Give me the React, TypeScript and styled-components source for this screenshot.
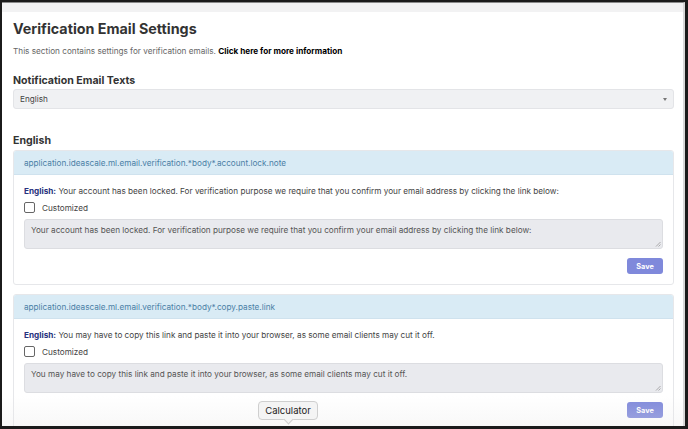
import styled, { createGlobalStyle } from 'styled-components';

const GlobalStyle = createGlobalStyle`
  html, body {
    margin: 0;
    padding: 0;
    background: #1b1b1b;
  }
  * {
    box-sizing: border-box;
  }
`;

const Frame = styled.div`
  width: 688px;
  height: 429px;
  padding: 2px 3px 3px 2px;
  background: #1b1b1b;
  font-family: Inter, 'Liberation Sans', sans-serif;
`;

const Window = styled.div`
  position: relative;
  height: 100%;
  background: #fff;
  border-top: 1px solid #8a8a8a;
  border-right: 2px solid #d8d8d8;
  overflow: hidden;
  display: flex;
  flex-direction: column;
`;

const TopBand = styled.div`
  height: 9px;
  flex-shrink: 0;
  background: #f2f2f3;
`;

const Content = styled.div`
  padding: 7px 9px 0 11px;
  display: flex;
  flex-direction: column;
`;

const Title = styled.h1`
  margin: 0;
  font-size: 14.3px;
  font-weight: 700;
  color: #333;
  line-height: 20px;
`;

const Subtitle = styled.p`
  margin: 6px 0 0;
  font-size: 8.2px;
  color: #666;
  line-height: 12px;

  b {
    color: #000;
    font-weight: 700;
  }
`;

const SectionTitle = styled.h2<{ $top: number }>`
  margin: ${({ $top }) => $top}px 0 0;
  font-size: 10.6px;
  font-weight: 700;
  color: #333;
  line-height: 16px;
`;

const Select = styled.div`
  margin-top: 0;
  height: 20px;
  display: flex;
  align-items: center;
  justify-content: space-between;
  padding: 0 6px;
  background: #f0f1f3;
  border: 1px solid #e3e4e7;
  border-radius: 3px;
  font-size: 8.2px;
  color: #444;
`;

const Caret = styled.span`
  width: 0;
  height: 0;
  border-left: 2.5px solid transparent;
  border-right: 2.5px solid transparent;
  border-top: 3px solid #777;
`;

const Cards = styled.div`
  margin-top: 1px;
  display: flex;
  flex-direction: column;
  gap: 9px;
`;

const Card = styled.div`
  border: 1px solid #e6e7ea;
  border-radius: 3px;
  overflow: hidden;
`;

const CardHeader = styled.div`
  height: 24px;
  display: flex;
  align-items: center;
  padding: 0 10px;
  background: #d9ebf5;
  border-bottom: 1px solid #cfe2ee;
  color: #4a80a6;
  font-size: 8.2px;
`;

const CardBody = styled.div`
  padding: 10px;
  display: flex;
  flex-direction: column;
`;

const Original = styled.div`
  font-size: 8.2px;
  color: #444;
  line-height: 12px;

  b {
    color: #26327d;
    font-weight: 700;
  }
`;

const CheckRow = styled.label`
  margin-top: 5px;
  display: flex;
  align-items: center;
  gap: 7px;
  font-size: 8.2px;
  color: #444;
  height: 11px;
`;

const Box = styled.span`
  width: 11px;
  height: 11px;
  border: 1px solid #666;
  border-radius: 2px;
  background: #fff;
`;

const TextArea = styled.div`
  position: relative;
  margin-top: 6px;
  height: 30px;
  padding: 4px 6px;
  background: #e9eaee;
  border: 1px solid #dcdde1;
  border-radius: 3px;
  font-size: 8.2px;
  color: #555;
  line-height: 12px;
`;

const Grip = styled.svg`
  position: absolute;
  right: 1px;
  bottom: 1px;
`;

const Actions = styled.div`
  margin-top: 9px;
  display: flex;
  justify-content: flex-end;
`;

const SaveButton = styled.button`
  width: 36px;
  height: 16px;
  padding: 0;
  border: none;
  border-radius: 3px;
  background: #7f89db;
  color: #fff;
  font-family: inherit;
  font-size: 7.3px;
  font-weight: 700;
`;

const BottomShade = styled.div`
  position: absolute;
  left: 0;
  right: 0;
  bottom: 0;
  height: 30px;
  background: linear-gradient(rgba(240, 240, 240, 0), rgba(232, 232, 232, 0.3));
  pointer-events: none;
`;

const Tooltip = styled.div`
  position: absolute;
  left: 256px;
  bottom: 6px;
  width: 60px;
  height: 19px;
  display: flex;
  align-items: center;
  justify-content: center;
  background: #f4f4f4;
  border: 1px solid #cfcfcf;
  border-radius: 4px;
  font-size: 9.5px;
  color: #222;

  &::after {
    content: '';
    position: absolute;
    left: 26px;
    bottom: -4px;
    width: 6px;
    height: 6px;
    background: #f4f4f4;
    border-right: 1px solid #cfcfcf;
    border-bottom: 1px solid #cfcfcf;
    transform: rotate(45deg);
  }
`;

const entries = [
  {
    key: 'application.ideascale.ml.email.verification.*body*.account.lock.note',
    text: 'Your account has been locked. For verification purpose we require that you confirm your email address by clicking the link below:',
  },
  {
    key: 'application.ideascale.ml.email.verification.*body*.copy.paste.link',
    text: 'You may have to copy this link and paste it into your browser, as some email clients may cut it off.',
  },
];

export default function App() {
  return (
    <>
      <GlobalStyle />
      <Frame>
        <Window>
          <TopBand />
          <Content>
            <Title>Verification Email Settings</Title>
            <Subtitle>
              This section contains settings for verification emails. <b>Click here for more information</b>
            </Subtitle>
            <SectionTitle $top={16}>Notification Email Texts</SectionTitle>
            <Select>
              English
              <Caret />
            </Select>
            <SectionTitle $top={24}>English</SectionTitle>
            <Cards>
              {entries.map((entry) => (
                <Card key={entry.key}>
                  <CardHeader>{entry.key}</CardHeader>
                  <CardBody>
                    <Original>
                      <b>English:</b> {entry.text}
                    </Original>
                    <CheckRow>
                      <Box />
                      Customized
                    </CheckRow>
                    <TextArea>
                      {entry.text}
                      <Grip width="6" height="6" viewBox="0 0 6 6">
                        <path d="M5.5 1 L1 5.5 M5.5 3.5 L3.5 5.5" stroke="#999" strokeWidth="0.8" />
                      </Grip>
                    </TextArea>
                    <Actions>
                      <SaveButton>Save</SaveButton>
                    </Actions>
                  </CardBody>
                </Card>
              ))}
            </Cards>
          </Content>
          <BottomShade />
          <Tooltip>Calculator</Tooltip>
        </Window>
      </Frame>
    </>
  );
}
